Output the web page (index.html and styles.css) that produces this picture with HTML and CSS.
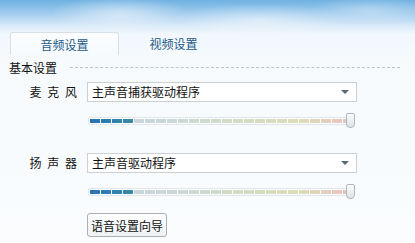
FILE: index.html
```html
<!DOCTYPE html>
<html lang="zh-CN">
<head>
  <meta charset="UTF-8">
  <title>音频设置</title>
  <link rel="stylesheet" href="styles.css">
</head>
<body>
  <div class="panel">
    <!-- tab strip over the sky banner -->
    <div class="tabs">
      <div class="tab active">音频设置</div>
      <div class="tab">视频设置</div>
    </div>

    <div class="section-title">
      <span>基本设置</span>
      <i class="rule"></i>
    </div>

    <div class="device-grid">
      <label class="device-label">麦 克 风</label>
      <div class="select">主声音捕获驱动程序<span class="caret"></span></div>
      <div class="meter mic"><span class="thumb"></span></div>

      <label class="device-label gap-top">扬 声 器</label>
      <div class="select gap-top">主声音驱动程序<span class="caret"></span></div>
      <div class="meter spk"><span class="thumb"></span></div>

      <button class="wizard">语音设置向导</button>
    </div>
  </div>
</body>
</html>
```

FILE: styles.css
```css
html, body {
  margin: 0;
  padding: 0;
}
body {
  width: 415px;
  height: 243px;
  overflow: hidden;
  font-family: "Noto Sans CJK SC", "Noto Sans", sans-serif;
  font-size: 12px;
  color: #111;
  background:
    radial-gradient(ellipse 70px 18px at 120px 14px, rgba(255,255,255,0.5), rgba(255,255,255,0) 100%),
    radial-gradient(ellipse 90px 16px at 260px 20px, rgba(255,255,255,0.45), rgba(255,255,255,0) 100%),
    radial-gradient(ellipse 60px 14px at 370px 10px, rgba(255,255,255,0.3), rgba(255,255,255,0) 100%),
    linear-gradient(to bottom, #6fb1e2 0, #a3cdee 14px, #d9eaf8 26px, #f1f7fd 34px, #f6fafd 60px, #fafcfe 243px);
}
.panel {
  padding-top: 32px;
}
.tabs {
  display: flex;
  height: 23px;
  padding-left: 10px;
}
.tab {
  width: 109px;
  line-height: 23px;
  text-align: center;
  color: #1f5a88;
  font-size: 12px;
}
.tab.active {
  box-sizing: border-box;
  border: 1px solid #d6e0e9;
  border-bottom: none;
  border-radius: 3px 3px 0 0;
  background: linear-gradient(to bottom, rgba(255,255,255,0.7), rgba(246,250,253,0.9));
}
.section-title {
  display: flex;
  align-items: center;
  margin-top: 5px;
  padding-left: 9px;
  padding-right: 15px;
  height: 15px;
}
.section-title span {
  color: #111;
}
.rule {
  flex: 1;
  margin-left: 13px;
  border-top: 1px dashed #b9c6cf;
}
.device-grid {
  display: grid;
  grid-template-columns: 77px 270px;
  column-gap: 10px;
  margin-top: 7px;
}
.device-label {
  grid-column: 1;
  text-align: right;
  line-height: 20px;
  word-spacing: 3px;
  color: #111;
}
.select {
  grid-column: 2;
  position: relative;
  box-sizing: border-box;
  height: 20px;
  line-height: 18px;
  padding-left: 4px;
  border: 1px solid #c9d0d6;
  background: #fff;
  color: #111;
}
.caret {
  position: absolute;
  right: 7px;
  top: 7px;
  width: 0;
  height: 0;
  border-left: 4px solid transparent;
  border-right: 4px solid transparent;
  border-top: 4px solid #56687a;
}
.meter {
  grid-column: 2;
  position: relative;
  width: 262px;
  height: 8px;
  margin-top: 15px;
  margin-left: 1px;
  box-sizing: border-box;
  border: 1px solid #e0e7ec;
  border-radius: 2px;
  background: #fff;
  padding: 1px;
}
.meter::before {
  content: "";
  display: block;
  height: 100%;
  background:
    repeating-linear-gradient(to right, rgba(255,255,255,0) 0 10px, #fff 10px 11px),
    linear-gradient(to right, #2a72b2 0, #2f80b2 22px, #3a8aa0 43px, #c7d5dd 43px, #cbd8d6 90px, #d2dcc4 150px, #dcdcb8 210px, #e6cabf 245px, #e8c2bb 260px);
}
.thumb {
  position: absolute;
  right: -6px;
  top: -5px;
  width: 9px;
  height: 15px;
  box-sizing: border-box;
  border: 1px solid #aeb7bf;
  border-radius: 2px 2px 4px 4px;
  background: linear-gradient(to bottom, #fbfbfb, #dfe3e6);
}
.gap-top {
  margin-top: 28px;
}
.wizard {
  grid-column: 2;
  justify-self: start;
  margin-top: 17px;
  height: 24px;
  padding: 0 3px;
  font-family: "Noto Sans CJK SC", sans-serif;
  font-size: 12px;
  color: #111;
  border: 1px solid #a9afb5;
  border-radius: 3px;
  background: linear-gradient(to bottom, #ffffff, #eef1f3);
  cursor: pointer;
}
```
